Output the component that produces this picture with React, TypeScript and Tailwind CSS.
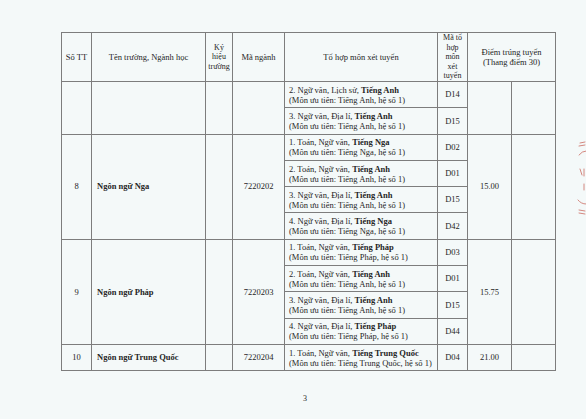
import type { ReactNode } from 'react';

type Combo = { line: ReactNode; sub: string; code: string };

const cell = 'border border-[#7d7d7d] p-0 align-middle';

function Subj({ pre, bold, sub }: { pre: string; bold: string; sub: string }) {
  return (
    <div className="pl-[4px] text-left leading-[10px]">
      <div>
        {pre}
        <b>{bold}</b>
      </div>
      <div>{sub}</div>
    </div>
  );
}

const GROUPS: {
  no: string;
  name: string;
  code: string;
  score: string;
  combos: Combo[];
}[] = [
  {
    no: '',
    name: '',
    code: '',
    score: '',
    combos: [
      {
        line: <Subj pre="2. Ngữ văn, Lịch sử, " bold="Tiếng Anh" sub="(Môn ưu tiên: Tiếng Anh, hệ số 1)" />,
        sub: '',
        code: 'D14',
      },
      {
        line: <Subj pre="3. Ngữ văn, Địa lí, " bold="Tiếng Anh" sub="(Môn ưu tiên: Tiếng Anh, hệ số 1)" />,
        sub: '',
        code: 'D15',
      },
    ],
  },
  {
    no: '8',
    name: 'Ngôn ngữ Nga',
    code: '7220202',
    score: '15.00',
    combos: [
      {
        line: <Subj pre="1. Toán, Ngữ văn, " bold="Tiếng Nga" sub=" (Môn ưu tiên: Tiếng Nga, hệ số 1)" />,
        sub: '',
        code: 'D02',
      },
      {
        line: <Subj pre="2. Toán, Ngữ văn, " bold="Tiếng Anh" sub=" (Môn ưu tiên: Tiếng Anh, hệ số 1)" />,
        sub: '',
        code: 'D01',
      },
      {
        line: <Subj pre="3. Ngữ văn, Địa lí, " bold="Tiếng Anh" sub=" (Môn ưu tiên: Tiếng Anh, hệ số 1)" />,
        sub: '',
        code: 'D15',
      },
      {
        line: <Subj pre="4. Ngữ văn, Địa lí, " bold="Tiếng Nga" sub=" (Môn ưu tiên: Tiếng Nga, hệ số 1)" />,
        sub: '',
        code: 'D42',
      },
    ],
  },
  {
    no: '9',
    name: 'Ngôn ngữ Pháp',
    code: '7220203',
    score: '15.75',
    combos: [
      {
        line: <Subj pre="1. Toán, Ngữ văn, " bold="Tiếng Pháp" sub=" (Môn ưu tiên: Tiếng Pháp, hệ số 1)" />,
        sub: '',
        code: 'D03',
      },
      {
        line: <Subj pre="2. Toán, Ngữ văn, " bold="Tiếng Anh" sub="(Môn ưu tiên: Tiếng Anh, hệ số 1)" />,
        sub: '',
        code: 'D01',
      },
      {
        line: <Subj pre="3. Ngữ văn, Địa lí, " bold="Tiếng Anh" sub="(Môn ưu tiên: Tiếng Anh, hệ số 1)" />,
        sub: '',
        code: 'D15',
      },
      {
        line: <Subj pre="4. Ngữ văn, Địa lí, " bold="Tiếng Pháp" sub="(Môn ưu tiên: Tiếng Pháp, hệ số 1)" />,
        sub: '',
        code: 'D44',
      },
    ],
  },
  {
    no: '10',
    name: 'Ngôn ngữ Trung Quốc',
    code: '7220204',
    score: '21.00',
    combos: [
      {
        line: (
          <Subj
            pre="1. Toán, Ngữ văn, "
            bold="Tiếng Trung Quốc"
            sub="(Môn ưu tiên: Tiếng Trung Quốc, hệ số 1)"
          />
        ),
        sub: '',
        code: 'D04',
      },
    ],
  },
];

function StampMarks() {
  return (
    <svg
      className="absolute left-[572px] top-[138px]"
      width="14"
      height="80"
      viewBox="0 0 14 80"
      fill="none"
      stroke="#d07a72"
      strokeWidth="0.9"
      strokeLinecap="round"
    >
      <path d="M8 5 L13 4" />
      <path d="M7 8 L13 7" />
      <path d="M7 17 Q10 13 14 13" />
      <path d="M8 31 L10 37" />
      <path d="M12 31 L12 38" />
      <path d="M12 46 L12 52" />
      <path d="M6 62 Q9 66 14 66" />
      <path d="M7 72 L13 73" />
      <path d="M7 75 L13 76" />
    </svg>
  );
}

export default function App() {
  return (
    <div className="relative w-[586px] h-[419px] overflow-hidden bg-[#f4f9f9] font-['Liberation_Serif',serif] text-[8.5px] text-[#262626]">
      <div className="pl-[61px] pt-[32px]">
        <table className="w-[495px] table-fixed border-collapse text-center">
          <colgroup>
            <col className="w-[30px]" />
            <col className="w-[114px]" />
            <col className="w-[27px]" />
            <col className="w-[52px]" />
            <col className="w-[153px]" />
            <col className="w-[30px]" />
            <col className="w-[44px]" />
            <col className="w-[44px]" />
          </colgroup>
          <thead>
            <tr className="h-[49px] leading-[10px]">
              <td className={cell}>Số TT</td>
              <td className={cell}>Tên trường, Ngành học</td>
              <td className={cell}>
                <div className="text-[8px] leading-[9.5px]">
                  Ký
                  <br />
                  hiệu
                  <br />
                  trường
                </div>
              </td>
              <td className={cell}>Mã ngành</td>
              <td className={cell}>Tổ hợp môn xét tuyển</td>
              <td className={cell}>
                <div className="text-[8px] leading-[9.5px]">
                  Mã tổ
                  <br />
                  hợp
                  <br />
                  môn
                  <br />
                  xét
                  <br />
                  tuyển
                </div>
              </td>
              <td className={cell} colSpan={2}>
                Điểm trúng tuyển
                <br />
                (Thang điểm 30)
              </td>
            </tr>
          </thead>
          <tbody>
            {GROUPS.map((g) =>
              g.combos.map((c, i) => (
                <tr key={g.no + c.code} className="h-[26.3px]">
                  {i === 0 && (
                    <>
                      <td className={cell} rowSpan={g.combos.length}>
                        {g.no}
                      </td>
                      <td className={cell + ' pl-[5px] text-left font-bold'} rowSpan={g.combos.length}>
                        {g.name}
                      </td>
                      <td className={cell} rowSpan={g.combos.length} />
                      <td className={cell} rowSpan={g.combos.length}>
                        {g.code}
                      </td>
                    </>
                  )}
                  <td className={cell}>{c.line}</td>
                  <td className={cell}>{c.code}</td>
                  {i === 0 && (
                    <>
                      <td className={cell} rowSpan={g.combos.length}>
                        {g.score}
                      </td>
                      <td className={cell} rowSpan={g.combos.length} />
                    </>
                  )}
                </tr>
              )),
            )}
          </tbody>
        </table>
      </div>
      <div className="pt-[22px] pl-[303px] text-[8px]">3</div>
      <StampMarks />
    </div>
  );
}
